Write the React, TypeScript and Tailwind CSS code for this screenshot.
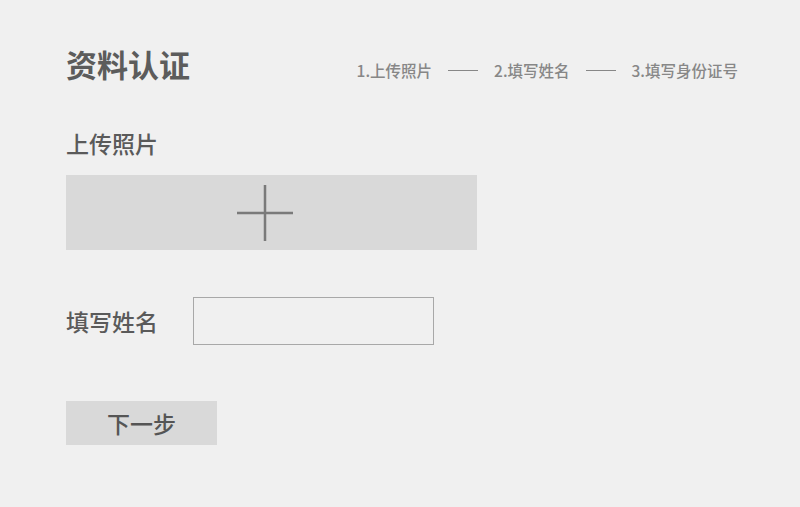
import React from 'react';

const steps = ['1.上传照片', '2.填写姓名', '3.填写身份证号'];

export default function App() {
  const [name, setName] = React.useState('');

  return (
    <div className="w-full h-[507px] bg-[#f0f0f0] pl-[66px] pr-[62px] pt-[48px] font-['Noto_Sans_CJK_SC',sans-serif] overflow-hidden">
      {/* Header */}
      <div className="flex items-baseline justify-between">
        <h1 className="text-[31px] leading-[31px] font-bold text-[#5c5c5c]">资料认证</h1>
        <div className="flex items-baseline text-[15.5px] leading-none font-medium text-[#878787]">
          {steps.map((s, i) => (
            <React.Fragment key={s}>
              {i > 0 && <span className="mx-[16px] w-[30px] h-px bg-[#878787] self-center" />}
              <span>{s}</span>
            </React.Fragment>
          ))}
        </div>
      </div>

      {/* Upload */}
      <div className="mt-[53px] text-[23px] leading-[23px] font-medium text-[#5a5a5a]">上传照片</div>
      <button className="mt-[20px] w-[411px] h-[75px] bg-[#d9d9d9] flex items-center justify-center pr-[14px]">
        <svg width="56" height="56" viewBox="0 0 56 56">
          <path d="M0 28H56M28 0V56" stroke="#7a7a7a" strokeWidth="2.5" />
        </svg>
      </button>

      {/* Name */}
      <div className="mt-[47px] flex items-center gap-[35px]">
        <span className="text-[23px] leading-[23px] font-medium text-[#5a5a5a]">填写姓名</span>
        <input
          value={name}
          onChange={(e) => setName(e.target.value)}
          className="w-[241px] h-[48px] border border-[#a8a8a8] bg-[#f0f0f0] px-3 text-base outline-none"
        />
      </div>

      {/* Next */}
      <button className="mt-[56px] w-[151px] h-[44px] bg-[#d9d9d9] text-[23px] leading-none text-[#555] font-medium flex items-center justify-center">
        下一步
      </button>
    </div>
  );
}
